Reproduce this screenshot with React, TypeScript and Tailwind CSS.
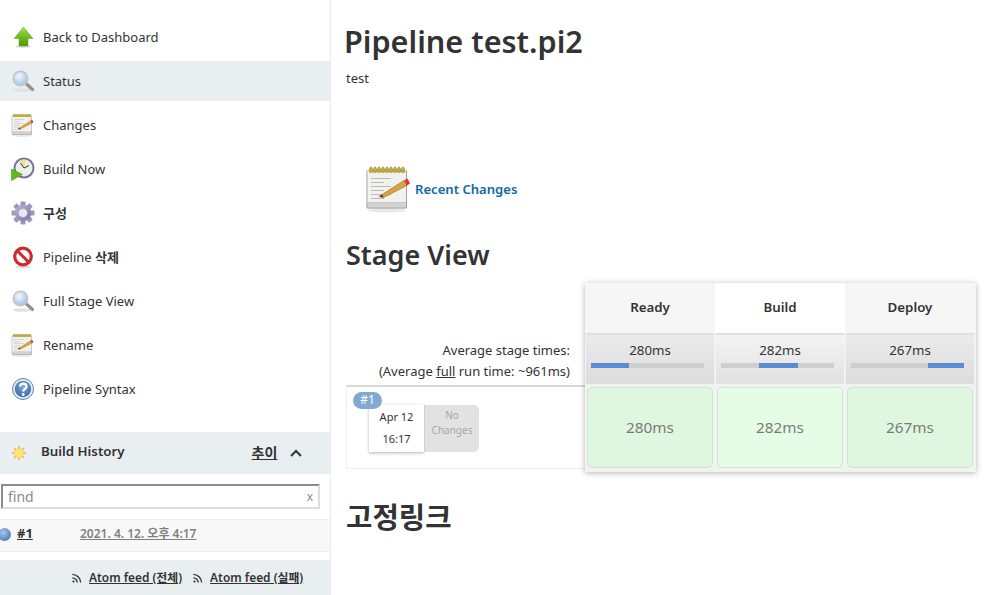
import React from 'react';

const UpArrowIcon = () => (
  <svg width="24" height="24" viewBox="0 0 24 24">
    <defs>
      <linearGradient id="arrowFill" x1="0" y1="0" x2="0" y2="1">
        <stop offset="0" stopColor="#a5dc5c" />
        <stop offset="0.55" stopColor="#6fb81f" />
        <stop offset="1" stopColor="#4a9a06" />
      </linearGradient>
    </defs>
    <ellipse cx="12" cy="21.5" rx="8" ry="1.5" fill="#dcdcdc" />
    <path d="M12.5 2 L22 13.5 H17 V21 H8 V13.5 H3 Z" fill="url(#arrowFill)" stroke="#6aa52a" strokeWidth="0.5" />
  </svg>
);

const SearchIcon = () => (
  <svg width="24" height="24" viewBox="0 0 24 24">
    <defs>
      <radialGradient id="lens" cx="0.4" cy="0.35" r="0.8">
        <stop offset="0" stopColor="#f2f7fd" />
        <stop offset="1" stopColor="#8fb6e2" />
      </radialGradient>
    </defs>
    <ellipse cx="11" cy="21" rx="9" ry="1.8" fill="#dfe2e4" />
    <path d="M15.5 15 L21.5 20.5" stroke="#8f9193" strokeWidth="3.2" strokeLinecap="round" />
    <circle cx="9.5" cy="9.5" r="7.2" fill="url(#lens)" stroke="#c2c5ca" strokeWidth="1.6" />
  </svg>
);

const NotepadIcon = ({ size = 24 }: { size?: number }) => (
  <svg width={size} height={size} viewBox="0 0 48 48">
    <ellipse cx="22" cy="45.5" rx="19" ry="2.2" fill="#e8e8e8" />
    <rect x="1.5" y="5" width="40.5" height="38.5" rx="1.5" fill="#8f8f8f" />
    <rect x="2.3" y="5.5" width="38.9" height="32" fill="#f1f1ee" />
    <rect x="2.3" y="37.5" width="38.9" height="5.2" fill="#d2d2d2" />
    <rect x="4" y="3.5" width="36" height="4" fill="#bfb27a" />
    {[5, 9, 13, 17, 21, 25, 29, 33, 37].map((x) => (
      <rect key={x} x={x} y="2" width="2" height="5.5" rx="1" fill="#e3c33a" stroke="#7f6a10" strokeWidth="0.5" />
    ))}
    {[13, 17, 21, 25, 29, 33].map((y, i) => (
      <rect key={y} x="6" y={y} width={i % 2 ? 13 : 20} height="1" fill="#b8b8b8" />
    ))}
    <path d="M14 31.5 L39 15.5 L42 20.5 L18.5 32.5 Z" fill="#d9a441" stroke="#8f6a20" strokeWidth="0.6" />
    <path d="M14 31.5 L17.5 29.5 L18.5 32.5 Z" fill="#4a3a20" />
    <path d="M39 15.5 L42.5 13.5 L45 18.5 L42 20.5 Z" fill="#e0342c" />
  </svg>
);

const ClockPlayIcon = () => (
  <svg width="24" height="24" viewBox="0 0 24 24">
    <circle cx="13" cy="11" r="10.5" fill="#77739a" />
    <circle cx="13" cy="11" r="8.5" fill="#eeeeea" />
    <path d="M13 11 L9 3.5 A8.5 8.5 0 0 1 15 2.8 Z" fill="#efdd95" />
    <path d="M13 11 L9.5 6 M13 11 L18 8.5" stroke="#333" strokeWidth="1" />
    <path d="M0.5 12 L11.5 17.5 L0.5 23.5 Z" fill="#62ba16" stroke="#3e8a0a" strokeWidth="0.5" />
  </svg>
);

const GearIcon = () => (
  <svg width="24" height="24" viewBox="0 0 24 24">
    <defs>
      <linearGradient id="gearFill" x1="0" y1="0" x2="1" y2="1">
        <stop offset="0" stopColor="#b9b7d8" />
        <stop offset="1" stopColor="#77769f" />
      </linearGradient>
    </defs>
    <g fill="url(#gearFill)">
      {[0, 45, 90, 135, 180, 225, 270, 315].map((a) => (
        <rect key={a} x="9.5" y="0.5" width="5" height="6" rx="1" fill="#9a98c0" transform={`rotate(${a} 12 12)`} />
      ))}
      <circle cx="12" cy="12" r="8.2" />
    </g>
    <circle cx="12" cy="12" r="4.3" fill="#e9e8f2" />
  </svg>
);

const NoEntryIcon = () => (
  <svg width="24" height="24" viewBox="0 0 24 24">
    <ellipse cx="12" cy="22" rx="8" ry="1.5" fill="#e0e0e0" />
    <circle cx="12" cy="11.5" r="8.3" fill="#fff" stroke="#cf2a2f" strokeWidth="3.2" />
    <path d="M6.5 6 L17.5 17" stroke="#cf2a2f" strokeWidth="3" />
  </svg>
);

const HelpIcon = () => (
  <svg width="24" height="24" viewBox="0 0 24 24">
    <defs>
      <radialGradient id="helpFill" cx="0.5" cy="0.35" r="0.75">
        <stop offset="0" stopColor="#86aad8" />
        <stop offset="1" stopColor="#2f5f9c" />
      </radialGradient>
    </defs>
    <circle cx="12" cy="12" r="10.5" fill="#e8edf3" stroke="#5d82ad" strokeWidth="1" />
    <circle cx="12" cy="12" r="8.2" fill="url(#helpFill)" />
    <path d="M9 9.5 C9 5.5 15.5 5.8 15.5 9.5 C15.5 12 12.2 12 12.2 14.5" fill="none" stroke="#fff" strokeWidth="2.2" />
    <circle cx="12.2" cy="17.5" r="1.4" fill="#fff" />
  </svg>
);

const SunIcon = () => (
  <svg width="16" height="16" viewBox="0 0 16 16">
    <g stroke="#f0b25c" strokeWidth="1.6">
      <path d="M8 1 V15 M1 8 H15 M3 3 L13 13 M13 3 L3 13" />
    </g>
    <circle cx="8" cy="8" r="4.6" fill="#fde66e" stroke="#f6cc58" strokeWidth="0.6" />
  </svg>
);

const RssIcon = () => (
  <svg width="11" height="12" viewBox="0 0 12 12" fill="none" stroke="#333" strokeWidth="1.5">
    <path d="M1.5 2 C6 2 10.5 6 10.5 11" />
    <path d="M1.5 5.8 C4.3 5.8 6.8 8 6.8 11" />
    <circle cx="2.7" cy="9.8" r="1.2" fill="#333" stroke="none" />
  </svg>
);

const tasks = [
  { label: <>Back to Dashboard</>, icon: <UpArrowIcon /> },
  { label: <>Status</>, icon: <SearchIcon />, active: true },
  { label: <>Changes</>, icon: <NotepadIcon /> },
  { label: <>Build Now</>, icon: <ClockPlayIcon /> },
  { label: <b className="font-bold">구성</b>, icon: <GearIcon /> },
  { label: <>Pipeline <b className="font-bold">삭제</b></>, icon: <NoEntryIcon /> },
  { label: <>Full Stage View</>, icon: <SearchIcon /> },
  { label: <>Rename</>, icon: <NotepadIcon /> },
  { label: <>Pipeline Syntax</>, icon: <HelpIcon /> },
];

const stages = [
  { name: 'Ready', time: '280ms', head: 'bg-[#f6f6f6]', avg: 'from-[#ebebeb] to-[#dcdcdc]', cell: 'bg-[#dff7df]', barLeft: 0, barWidth: 34 },
  { name: 'Build', time: '282ms', head: 'bg-white', avg: 'from-[#f3f3f3] to-[#e2e2e2]', cell: 'bg-[#e5fde5]', barLeft: 33.6, barWidth: 34.5 },
  { name: 'Deploy', time: '267ms', head: 'bg-[#f6f6f6]', avg: 'from-[#ebebeb] to-[#dcdcdc]', cell: 'bg-[#dff7df]', barLeft: 68, barWidth: 32 },
];

const StageView = () => (
  <div className="flex items-start">
    <div className="w-[239px] shrink-0 pt-[50px]">
      <div className="h-[52px] pr-[15px] pt-[7px] text-right text-[13px] leading-[21px] text-[#333]">
        <div>Average stage times:</div>
        <div>
          (Average <span className="underline">full</span> run time: ~961ms)
        </div>
      </div>
      <div className="h-[84px] border-t-2 border-l border-b border-t-[#d8d8d8] border-l-[#eeeeee] border-b-[#eeeeee] pl-[6px] pt-[5px]">
        <span className="relative z-10 block h-[17px] w-[29px] rounded-full bg-[#82a9d1] text-center text-[12px] leading-[16px] text-white">
          #1
        </span>
        <div className="ml-[16px] -mt-[4px] flex h-[47px] w-[110px]">
          <div className="flex w-[55px] flex-col items-center bg-white pt-[1px] text-[11px] leading-[22px] text-[#333] shadow-[0_1px_3px_rgba(0,0,0,0.3)]">
            <span>Apr 12</span>
            <span>16:17</span>
          </div>
          <div className="flex w-[55px] flex-col items-center rounded-r-[5px] border-l border-[#cfcfcf] bg-[#e2e2e2] text-[10px] leading-[15px] text-[#a8a8a8]">
            <span className="pt-[3px]">No</span>
            <span>Changes</span>
          </div>
        </div>
      </div>
    </div>
    <div className="flex w-[391px] shrink-0 bg-[#f0f3f0] shadow-[0_1px_6px_rgba(0,0,0,0.3)]">
      {stages.map((s) => (
        <div key={s.name} className="flex w-[130px] flex-col">
          <div className={`flex h-[50px] items-center justify-center text-[13.3px] font-semibold text-[#333] ${s.head}`}>
            {s.name}
          </div>
          <div className={`mx-px h-[51px] border-t-2 border-[#e0e0e0] bg-gradient-to-b pt-[6px] text-center text-[13.3px] leading-[18px] text-[#333] ${s.avg}`}>
            {s.time}
            <div className="relative mt-[4px] ml-[5px] mr-[10px] h-[5px] bg-[#cfcfcf]">
              <div className="absolute inset-y-0 bg-[#5b8bd0]" style={{ left: `${s.barLeft}%`, width: `${s.barWidth}%` }} />
            </div>
          </div>
          <div className="h-[88px] px-[2px] pt-[3px]">
            <div className={`flex h-[81px] items-center justify-center rounded-[5px] border border-[#cfe3cf] text-[15.3px] text-[#7a7a7a] ${s.cell}`}>
              {s.time}
            </div>
          </div>
        </div>
      ))}
    </div>
  </div>
);

export default function App() {
  return (
    <div className="flex h-[595px] w-[997px] overflow-hidden bg-white font-['Noto_Sans','Noto_Sans_CJK_KR',sans-serif] text-[#333]">
      <aside className="flex w-[331px] shrink-0 flex-col border-r border-[#e8ecef]">
        <nav className="flex flex-col gap-[4px] pt-[17px]">
          {tasks.map((t, i) => (
            <div key={i} className={`flex h-[40px] items-center text-[13px] ${t.active ? 'bg-[#e9eef1]' : ''}`}>
              <span className="ml-[11px] flex w-[32px] shrink-0">{t.icon}</span>
              <span className="pt-[2px]">{t.label}</span>
            </div>
          ))}
        </nav>
        <div className="mt-[23px] flex h-[42px] items-center bg-[#e9eef1] pl-[11px]">
          <SunIcon />
          <span className="ml-[14px] pb-[2px] text-[13.3px] font-semibold">Build History</span>
          <span className="ml-[127px] pb-[2px] text-[14px] font-semibold underline">추이</span>
          <svg className="ml-[13px]" width="12" height="8" viewBox="0 0 12 8" fill="none" stroke="#333" strokeWidth="2">
            <path d="M1 7 L6 2 L11 7" />
          </svg>
        </div>
        <div className="mt-[10px] ml-px flex h-[25px] w-[319px] items-center justify-between border-2 border-[#dcdcdc] border-t-[#8c8c8c] border-l-[#8c8c8c] px-[5px] text-[14px] text-[#8a8a8a]">
          <span>find</span>
          <span className="text-[12px]">x</span>
        </div>
        <div className="mt-[10px] flex h-[33px] items-center border-y border-[#eceff1] bg-[#f8f8f8] pb-[3px]">
          <span className="-ml-[2px] h-[13px] w-[13px] rounded-full bg-[radial-gradient(circle_at_40%_35%,#a9c8ec,#2f62a3)]" />
          <span className="ml-[6px] w-[63px] text-[13px] font-bold underline">#1</span>
          <span className="text-[12px] font-semibold text-[#808080] underline">2021. 4. 12. 오후 4:17</span>
        </div>
        <div className="mt-[8px] flex h-[35px] items-center bg-[#e9eef1] pl-[71px] text-[11.9px] font-semibold">
          <RssIcon />
          <span className="ml-[7px] underline">Atom feed (전체)</span>
          <span className="ml-[10px]"><RssIcon /></span>
          <span className="ml-[7px] underline">Atom feed (실패)</span>
        </div>
      </aside>
      <main className="min-w-0 flex-1 pl-[14px]">
        <h1 className="mt-[21px] -ml-px text-[30.6px] leading-[40px] font-semibold">Pipeline test.pi2</h1>
        <p className="mt-[7px] pl-px text-[13px] leading-[20px]">test</p>
        <div className="mt-[77px] ml-[20px] flex h-[48px] items-center">
          <NotepadIcon size={48} />
          <span className="ml-[2px] pt-[2px] text-[13.1px] font-semibold text-[#10699f]">Recent Changes</span>
        </div>
        <h2 className="mt-[24px] ml-px text-[27px] leading-[36px] font-semibold">Stage View</h2>
        <div className="mt-[10px] ml-px">
          <StageView />
        </div>
        <h2 className="mt-[27px] ml-px text-[28.7px] leading-[36px] font-bold">고정링크</h2>
      </main>
    </div>
  );
}
